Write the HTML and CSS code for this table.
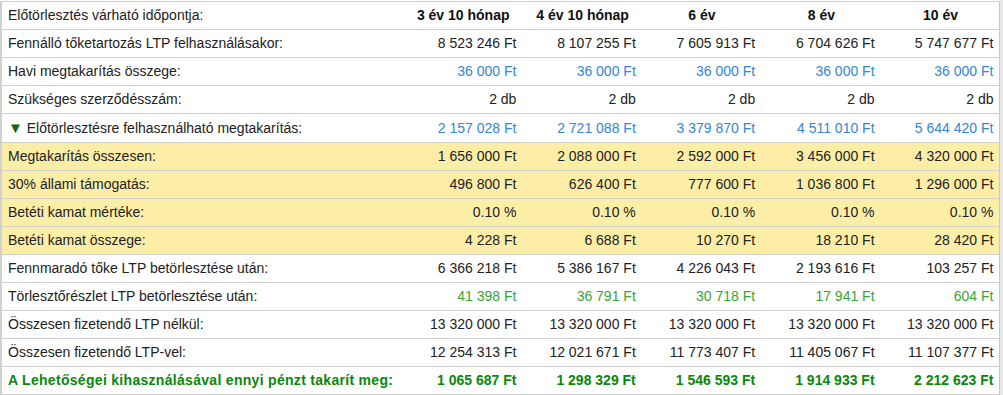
FILE: index.html
```html
<!DOCTYPE html>
<html lang="hu">
<head>
<meta charset="utf-8">
<link rel="stylesheet" href="styles.css">
</head>
<body>
<div class="frame">
<table class="calc">
  <colgroup>
    <col class="c-label"><col class="c-val"><col class="c-val"><col class="c-val"><col class="c-val"><col class="c-val">
  </colgroup>
  <tr class="head">
    <td class="label">Előtörlesztés várható időpontja:</td>
    <th>3 év 10 hónap</th><th>4 év 10 hónap</th><th>6 év</th><th>8 év</th><th>10 év</th>
  </tr>
  <tr>
    <td class="label">Fennálló tőketartozás LTP felhasználásakor:</td>
    <td>8 523 246 Ft</td><td>8 107 255 Ft</td><td>7 605 913 Ft</td><td>6 704 626 Ft</td><td>5 747 677 Ft</td>
  </tr>
  <tr class="blue">
    <td class="label">Havi megtakarítás összege:</td>
    <td>36 000 Ft</td><td>36 000 Ft</td><td>36 000 Ft</td><td>36 000 Ft</td><td>36 000 Ft</td>
  </tr>
  <tr>
    <td class="label">Szükséges szerződésszám:</td>
    <td>2 db</td><td>2 db</td><td>2 db</td><td>2 db</td><td>2 db</td>
  </tr>
  <tr class="blue">
    <td class="label"><span class="arrow">▼</span> Előtörlesztésre felhasználható megtakarítás:</td>
    <td>2 157 028 Ft</td><td>2 721 088 Ft</td><td>3 379 870 Ft</td><td>4 511 010 Ft</td><td>5 644 420 Ft</td>
  </tr>
  <tr class="sub">
    <td class="label">Megtakarítás összesen:</td>
    <td>1 656 000 Ft</td><td>2 088 000 Ft</td><td>2 592 000 Ft</td><td>3 456 000 Ft</td><td>4 320 000 Ft</td>
  </tr>
  <tr class="sub">
    <td class="label">30% állami támogatás:</td>
    <td>496 800 Ft</td><td>626 400 Ft</td><td>777 600 Ft</td><td>1 036 800 Ft</td><td>1 296 000 Ft</td>
  </tr>
  <tr class="sub">
    <td class="label">Betéti kamat mértéke:</td>
    <td>0.10 %</td><td>0.10 %</td><td>0.10 %</td><td>0.10 %</td><td>0.10 %</td>
  </tr>
  <tr class="sub">
    <td class="label">Betéti kamat összege:</td>
    <td>4 228 Ft</td><td>6 688 Ft</td><td>10 270 Ft</td><td>18 210 Ft</td><td>28 420 Ft</td>
  </tr>
  <tr>
    <td class="label">Fennmaradó tőke LTP betörlesztése után:</td>
    <td>6 366 218 Ft</td><td>5 386 167 Ft</td><td>4 226 043 Ft</td><td>2 193 616 Ft</td><td>103 257 Ft</td>
  </tr>
  <tr class="green">
    <td class="label">Törlesztőrészlet LTP betörlesztése után:</td>
    <td>41 398 Ft</td><td>36 791 Ft</td><td>30 718 Ft</td><td>17 941 Ft</td><td>604 Ft</td>
  </tr>
  <tr>
    <td class="label">Összesen fizetendő LTP nélkül:</td>
    <td>13 320 000 Ft</td><td>13 320 000 Ft</td><td>13 320 000 Ft</td><td>13 320 000 Ft</td><td>13 320 000 Ft</td>
  </tr>
  <tr>
    <td class="label">Összesen fizetendő LTP-vel:</td>
    <td>12 254 313 Ft</td><td>12 021 671 Ft</td><td>11 773 407 Ft</td><td>11 405 067 Ft</td><td>11 107 377 Ft</td>
  </tr>
  <tr class="total">
    <td class="label">A Lehetőségei kihasználásával ennyi pénzt takarít meg:</td>
    <td>1 065 687 Ft</td><td>1 298 329 Ft</td><td>1 546 593 Ft</td><td>1 914 933 Ft</td><td>2 212 623 Ft</td>
  </tr>
</table>
</div>
</body>
</html>
```

FILE: styles.css
```css
html, body {
  margin: 0;
  padding: 0;
  background: #fff;
}

.frame {
  width: 1003px;
  padding-top: 1px;
  box-sizing: border-box;
  border-right: 3px solid #e8e8e8;
}

.calc {
  width: 1000px;
  border-collapse: collapse;
  table-layout: fixed;
  font-family: "Liberation Sans", Arial, sans-serif;
  font-size: 14px;
  color: #222;
  border-left: 2px solid #d0d0d0;
  border-right: 1px solid #c8c8c8;
}

.c-label { width: 402px; }
.c-val { width: 119.4px; }

.calc td, .calc th {
  border-top: 1px solid #cfcfcf;
  border-bottom: 1px solid #cfcfcf;
  padding: 6px 6px 6px 7px;
  line-height: 15px;
  height: 15px;
  text-align: right;
  white-space: nowrap;
}

.calc td.label {
  text-align: left;
  padding-left: 6px;
}

.calc th {
  text-align: center;
  font-weight: bold;
  color: #111;
}

.blue td { color: #3585d6; }
.blue td.label { color: #222; }

.green td { color: #3aa335; }
.green td.label { color: #222; }

.sub td { background: #fdeea7; }

.arrow {
  color: #11660f;
  font-size: 15px;
}

.total td {
  color: #0b870b;
  font-weight: bold;
}
.total td.label {
  color: #0b870b;
  letter-spacing: 0.3px;
}
```
